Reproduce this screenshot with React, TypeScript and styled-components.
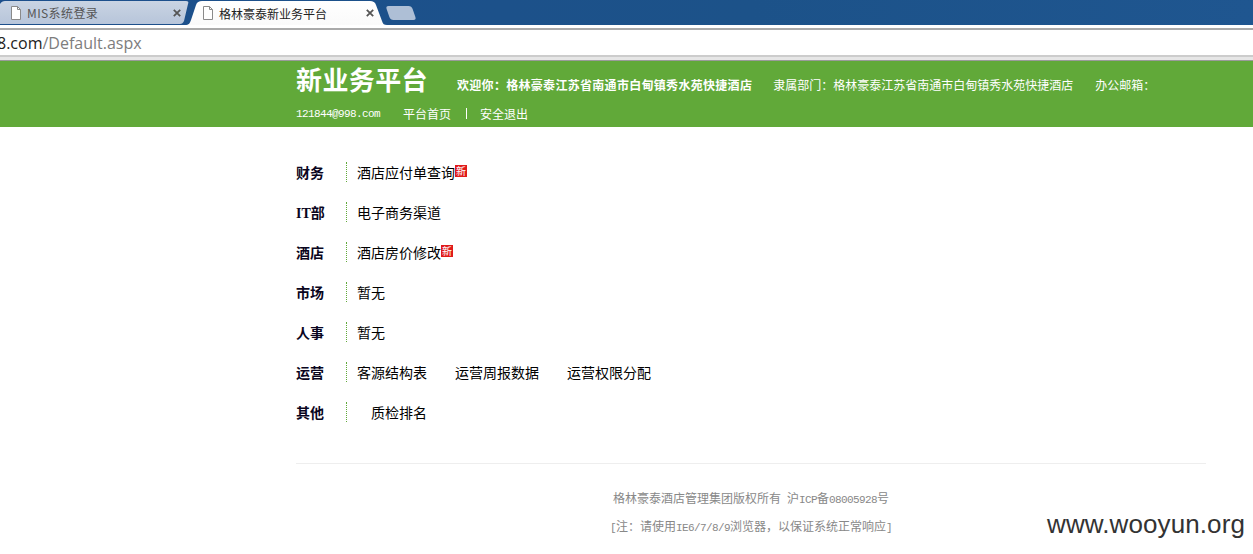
import React from 'react';
import styled, { createGlobalStyle } from 'styled-components';

const GlobalStyle = createGlobalStyle`
  html, body {
    margin: 0;
    padding: 0;
    background: #fff;
    overflow: hidden;
  }
  body {
    font-family: "Noto Sans CJK SC", "Liberation Sans", sans-serif;
  }
`;

const Page = styled.div`
  width: 1253px;
  height: 554px;
  position: relative;
  overflow: hidden;
  background: #fff;
`;

const TabStrip = styled.div`
  height: 25px;
  box-sizing: border-box;
  display: flex;
  align-items: flex-start;
  padding-top: 1px;
  background: linear-gradient(90deg, #1c4f8c 0%, #1c5289 60%, #1f5690 100%);
`;

const INACTIVE_SHAPE = "path('M0 23 L0 3 C1 1 3 0 5 0 L186 0 C188 0 189 1 188 3 L184 20 C183 22 182 23 180 23 Z')";
const ACTIVE_SHAPE = "path('M0 24 C4 24 5 22 6 19 L11 4 C12 1 14 0 17 0 L185 0 C188 0 190 1 191 4 L197 20 C198 23 199 24 202 24 Z')";

const Tab = styled.div<{ $active?: boolean }>`
  height: ${p => (p.$active ? '24px' : '23px')};
  box-sizing: border-box;
  display: flex;
  align-items: center;
  flex: none;
  width: ${p => (p.$active ? '202px' : '189px')};
  margin-left: ${p => (p.$active ? '-4px' : '0')};
  padding: ${p => (p.$active ? '0 13px 0 17px' : '0 8px 0 10px')};
  clip-path: ${p => (p.$active ? ACTIVE_SHAPE : INACTIVE_SHAPE)};
  background: ${p => (p.$active ? 'linear-gradient(#fff, #fafafa)' : 'linear-gradient(#c9d4e3, #b7c5da)')};
  color: ${p => (p.$active ? '#222' : '#555')};
  font-size: 12px;
`;

const TabTitle = styled.span<{ $active?: boolean }>`
  margin-left: 5px;
  flex: 1;
  white-space: nowrap;
  letter-spacing: ${p => (p.$active ? '0' : '0.4px')};
`;

const NewTab = styled.div`
  width: 26px;
  height: 14px;
  margin: 5px 0 0 1px;
  border-radius: 3px;
  background: #aebfd6;
  transform: skewX(19deg);
`;

const Toolbar = styled.div`
  height: 35px;
  box-sizing: border-box;
  padding-top: 3px;
  background: linear-gradient(#fff 3px, #e6e6e6 3px);
`;

const AddressBar = styled.div`
  height: 29px;
  box-sizing: border-box;
  display: flex;
  align-items: center;
  border-top: 2px solid #aaa;
  border-bottom: 2px solid #ccc;
  background: #fff;
  font: 16px "Open Sans", "Liberation Sans", sans-serif;
  color: #222;
  overflow: hidden;
`;

const UrlHost = styled.span`
  margin-left: -3px;
`;

const UrlPath = styled.span`
  color: #7d7d7d;
`;

const HeaderBand = styled.div`
  height: 67px;
  box-sizing: border-box;
  border-top: 1px solid #9a9a9a;
  background: #61a939;
  color: #fff;
  padding-left: 296px;
  font-size: 12px;
`;

const HeaderLine = styled.div`
  display: flex;
  align-items: baseline;
  height: 37px;
  white-space: nowrap;
`;

const LinkLine = styled.div`
  display: flex;
  align-items: center;
  height: 29px;
  padding-top: 2px;
  box-sizing: border-box;
  white-space: nowrap;
`;

const Brand = styled.span`
  font-size: 26px;
  font-weight: 700;
  letter-spacing: 0.4px;
  line-height: 35px;
  width: 161px;
  flex: none;
`;

const Welcome = styled.span`
  font-weight: 700;
  letter-spacing: 0.3px;
  margin-right: 21px;
`;

const Info = styled.span`
  margin-right: 22px;
`;

const Email = styled.span`
  font: 11px "Liberation Mono", monospace;
  letter-spacing: -0.6px;
  width: 107px;
  flex: none;
`;

const HeaderLink = styled.span``;

const LinkSep = styled.span`
  width: 1px;
  height: 11px;
  margin: 0 13px 0 15px;
  background: #fff;
`;

const Menu = styled.div`
  margin: 35px 0 0 296px;
  display: flex;
  flex-direction: column;
  gap: 20px;
`;

const MenuRow = styled.div`
  display: flex;
  align-items: center;
  height: 20px;
  font-size: 14px;
  color: #000;
`;

const RowLabel = styled.span`
  width: 50px;
  flex: none;
  font-weight: 700;
  font-family: "Liberation Serif", "Noto Sans CJK SC", serif;
  color: #0a0520;
`;

const RowLinks = styled.div<{ $indent?: boolean }>`
  display: flex;
  align-items: center;
  gap: 28px;
  height: 20px;
  padding-left: ${p => (p.$indent ? '24px' : '10px')};
  border-left: 1px dotted #61a939;
`;

const RowLink = styled.span`
  display: flex;
  align-items: center;
  white-space: nowrap;
`;

const NewBadge = styled.span`
  width: 12px;
  height: 14px;
  box-sizing: border-box;
  margin-top: -2px;
  border: solid #fff;
  border-width: 1px 0;
  background: #e01b1b;
  color: #fff;
  font-size: 10px;
  line-height: 12px;
  text-align: center;
`;

const Footer = styled.div`
  margin: 41px 47px 0 296px;
  border-top: 1px solid #eee;
  padding-top: 25px;
  display: flex;
  flex-direction: column;
  align-items: center;
  gap: 11px;
  font-size: 12px;
  line-height: 17px;
  color: #888;
`;

const FooterLine = styled.div`
  white-space: pre;
`;

const Mono = styled.span`
  font: 11px "Liberation Mono", monospace;
  letter-spacing: -0.6px;
`;

const Watermark = styled.div`
  position: absolute;
  right: 8px;
  bottom: 14px;
  font: 26px "Liberation Sans", sans-serif;
  letter-spacing: 0.1px;
  color: #333;
`;

const PageIcon = () => (
  <svg width="12" height="14" viewBox="0 0 12 14" fill="#fff" stroke="#8a8a8a" style={{ flex: 'none' }}>
    <path d="M1.5 .5h6l3 3v10h-9z" />
    <path d="M7.5 .5v3h3" fill="none" />
  </svg>
);

const CloseIcon = () => (
  <svg width="8" height="8" viewBox="0 0 8 8" stroke="#555" strokeWidth="1.8" style={{ flex: 'none' }}>
    <path d="M.8 .8l6.4 6.4M7.2 .8L.8 7.2" />
  </svg>
);

const rows = [
  { label: '财务', links: [{ text: '酒店应付单查询', isNew: true }] },
  { label: 'IT部', links: [{ text: '电子商务渠道' }] },
  { label: '酒店', links: [{ text: '酒店房价修改', isNew: true }] },
  { label: '市场', links: [{ text: '暂无' }] },
  { label: '人事', links: [{ text: '暂无' }] },
  { label: '运营', links: [{ text: '客源结构表' }, { text: '运营周报数据' }, { text: '运营权限分配' }] },
  { label: '其他', indent: true, links: [{ text: '质检排名' }] },
];

export default function App() {
  return (
    <Page>
      <GlobalStyle />
      <TabStrip>
        <Tab>
          <PageIcon />
          <TabTitle>MIS系统登录</TabTitle>
          <CloseIcon />
        </Tab>
        <Tab $active>
          <PageIcon />
          <TabTitle $active>格林豪泰新业务平台</TabTitle>
          <CloseIcon />
        </Tab>
        <NewTab />
      </TabStrip>
      <Toolbar>
        <AddressBar>
          <UrlHost>8.com</UrlHost>
          <UrlPath>/Default.aspx</UrlPath>
        </AddressBar>
      </Toolbar>
      <HeaderBand>
        <HeaderLine>
          <Brand>新业务平台</Brand>
          <Welcome>欢迎你：格林豪泰江苏省南通市白甸镇秀水苑快捷酒店</Welcome>
          <Info>隶属部门：格林豪泰江苏省南通市白甸镇秀水苑快捷酒店</Info>
          <Info>办公邮箱：</Info>
        </HeaderLine>
        <LinkLine>
          <Email>121844@998.com</Email>
          <HeaderLink>平台首页</HeaderLink>
          <LinkSep />
          <HeaderLink>安全退出</HeaderLink>
        </LinkLine>
      </HeaderBand>
      <Menu>
        {rows.map(row => (
          <MenuRow key={row.label}>
            <RowLabel>{row.label}</RowLabel>
            <RowLinks $indent={row.indent}>
              {row.links.map(link => (
                <RowLink key={link.text}>
                  {link.text}
                  {link.isNew && <NewBadge>新</NewBadge>}
                </RowLink>
              ))}
            </RowLinks>
          </MenuRow>
        ))}
      </Menu>
      <Footer>
        <FooterLine>格林豪泰酒店管理集团版权所有<Mono> </Mono>沪<Mono>ICP</Mono>备<Mono>08005928</Mono>号</FooterLine>
        <FooterLine><Mono>[</Mono>注：请使用<Mono>IE6/7/8/9</Mono>浏览器，以保证系统正常响应<Mono>]</Mono></FooterLine>
      </Footer>
      <Watermark>www.wooyun.org</Watermark>
    </Page>
  );
}
